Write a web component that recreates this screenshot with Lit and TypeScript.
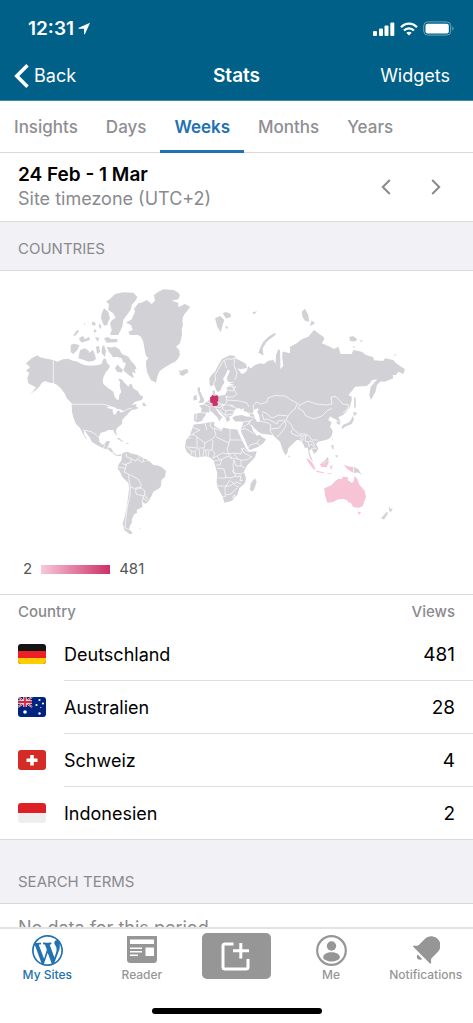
import { LitElement, html, svg, css } from "lit";
import { customElement, state } from "lit/decorators.js";

/* Land masses, in the coordinate space of the map's viewBox. */
const LAND = [
  // North and Central America
  "M26 363.3L31.7 358.3 37.3 355.3 40 357.3 46.7 358.7 53.3 360 57.3 361.7 60 360.5 63.3 359.3 68.3 358.7 71 360 74 361 77 361.5 80 363.3 85 365.3 91.7 365.7 96.7 365.3 101.7 364 102.5 361 104 358.3 106 359.3 107.3 363.3 110 366 108 370 106 371.7 104 376 102.7 380 103.3 384 108.3 388.3 113.3 391.7 114 395 116.3 399.3 118.7 400 119.3 395 121.3 392 119.7 386 120 382 118 378.5 121.7 379.3 125 383.3 128.3 386.7 130 384 131.7 384 133 388 136 390 138.3 391.7 140 395 143.3 396.7 141.7 400 135 401.7 131.7 405 136.7 404 136 406.5 139 408 135 409.5 131.7 410 128.3 413.3 125 416.7 122.3 420 122 424 116.7 428.3 116 431.7 117 436 114.3 432.7 113.3 430 108.3 430 105 431.7 100.7 432.7 99 436.7 99.3 441.7 102.7 445 105 443.3 106.7 441 110 441 108.3 446 107 447.5 110.7 447.7 112.7 450.7 114 453.3 117 455 121 454.3 121 456 116.7 456 112.7 453.3 108.3 449.8 103.3 448.3 96.7 445 91.7 441.7 90 438 87 434 84 430 84 434 87 439.5 85.5 438.5 82 432 80 428 76 424 73.5 418 72 412 71.7 406 71.7 403.3 66.7 398.3 65 394 61 388.5 58.3 386 53.3 383.3 50 382.7 45 381 41.7 382.7 39.5 386.5 35 390.7 29.3 394.8 32.7 391.7 36 387.3 33.3 386 28.3 383.3 27.3 378.3 29.3 372.7 26 370.7 30 367.3Z",
  "M142.5 403L144 402.5 146.5 406 143 406ZM116.7 438.3L119 438 124.3 442.3 121 441ZM125.5 443L129.5 443.3 127 444.3Z",
  // Canadian Arctic
  "M106 301.7L110 299 115 294 123.3 292.3 133.3 292.7 137.3 296.7 136 300 131.7 305 131 309 128.3 313.3 126 316 123.3 320 122.5 326 120.7 330 118.3 335 110 335 111.7 330 110 323.3 112 320 115.5 318 113.3 313.3 108.3 310 109 304Z",
  "M101.7 313.3L104 308.3 108.3 311.7 109 315 110 318.3 108.5 321 107.3 325 104 325.5 102.7 322.7 101 318ZM104 338.3L108 337 111 339 117.3 339 117.3 342.3 106.7 342.7Z",
  "M106.7 346.7L111 347.5 115 346.7 119.3 349.3 122 354 128.3 356.7 131.7 361.7 134 364 136.7 368.3 134.5 370 136 373.3 132 372 134 378.3 130 376 126.7 373.3 123.3 370.3 126 363.3 123 362 121.7 358.3 116.7 356.7 113 357.5 111.7 355 109 352Z",
  "M115 368.3L117.3 364.5 123 370 121.7 372.7 117 371.7ZM78.3 358.3L80 350 85 348.3 89 351 88.5 353 93 350 95 355 96 359 93.3 361 88.3 361.7 84 360ZM70.7 345L74 343.8 79.5 345 77.5 350 73.3 354 70.7 352ZM96 346.5L99 346 100 352 97 354ZM102 347L104 345 106 351 105 357 101.5 353ZM73.3 335.5L77 330 79.3 331 75 336ZM79 338.3L83 336 85 339.3 89 336.7 90 340 82 342.5 80 341ZM92 321.5L95.7 323 95 326 92 324.5ZM94 329L97 331 94 333ZM99 323.5L101.5 326 100.5 329 99 327ZM95 337L99.5 338 97.5 342ZM84 323L85.5 323.5 84.5 325ZM96 366L99 368 97 370Z",
  // Greenland and Iceland
  "M126 322.7L131.7 319.3 133 316 135 311.7 134 309 138.3 303.3 142 302.5 146.7 300 151.7 304 155 300.7 154 295 158 292 163.3 289.3 173.3 290 178 292.5 180 295 178.3 299.3 171.7 300.7 178.3 302.7 178.3 307.3 185 304 190 306.7 188 310 184.5 314 182.7 318 182.5 322 183 325 181.7 329 182 335 181 339 180 343.3 176 346.7 179.3 350 179.8 355 178.3 358.3 175 362 171.7 363.3 165 367.3 161 370 159.3 371.7 157.3 376.7 156 382.7 150.7 380 149 376 147.3 373.3 146 365 146 361 148.5 358 146 356 145 351.7 143.3 341.7 141 337 138.3 335 130 335 128.3 331.7 132.7 330 131 325Z",
  "M178.3 370L181 371 184 369.5 187.3 369 188.3 372.3 182.7 376 179.3 374.3 180 372.5Z",
  // South America
  "M121.7 454L124.3 452.3 128.3 451.7 130 453.3 138.3 455 143.3 458.3 147 459.5 150 461.7 153.3 465 158 465.5 161.7 467.3 166 470.7 165 476.7 161.5 480 161 486 159.3 488.3 153.3 491.7 151.5 496 148 502 145.5 503.8 142 502 142.5 507 136.7 510 137 513 134 514.5 131.7 520 132 522.5 129.7 526 129.3 529 132.7 533.3 130 534.3 124.3 530 122.7 523.3 124.5 518 126 511 127.3 503.3 128.3 495 129.3 488 128.3 482.7 122.7 477.5 120 472 117.7 468.3 118.3 465 121.7 460ZM139 528L141 528.3 140 529Z",
  // British Isles
  "M197.3 387.7L200 387.2 200 391 202.7 396.7 204.3 400 203.3 402.7 198.3 403 200.3 399.5 199.5 396 198.3 393.3ZM193.5 396.5L196.5 394.5 197 399.5 193.5 400.7Z",
  // Eurasia
  "M209.3 378.3L212 374.5 215 371.7 218.3 365 221.7 359.3 226 357 230 355.2 234.3 355.7 236.7 359 242 361.5 246 364 247 368 240 369.3 237.5 368 241 373.5 243.5 373.8 246.7 371 248.3 366 250.5 368.5 255 365 260 363.3 264 364 268.3 360.7 273.3 360 275.5 363.8 276 355 278.3 349.3 280 350 280.3 360 280.3 369 283.3 366 282.3 358 282.5 351.5 290 353.3 290 346.7 296.7 343.3 301.7 339.3 308.3 336.7 314 330 318.3 333.3 323.3 336.7 324.5 339 321.7 343.3 330 346.7 334 349 338.3 346.7 340.7 354 351.7 354 353.3 350 361.7 351.7 366 355 373.3 357.3 374 360.3 383.3 361 385 358.3 393.3 360 396 363 400 366 405 369.3 403.3 374 398.3 371.7 396 375 392.7 375 393.3 378.3 385 381.7 380.5 381.5 377 385 375.5 391.7 371 400 369.3 395 370.7 386.7 377.3 379.3 372 380 370 383.3 366.7 386 355 386.7 352 391 348.3 395 351.7 396.7 351.7 400 350 406.7 347 411 343 415 338.3 417.3 340.7 421.7 339.3 425 336.7 423.5 336.5 419.5 333.3 418.3 330 416.5 328.3 420 331.7 422.5 330 426.7 332.7 430.7 331.7 436 328.3 439.3 321.7 441 318.5 441.5 316 443.7 318.3 448.3 316.7 451.7 314 454 311.7 448.8 309 450.7 310.7 456 313.3 461.7 310.7 459.3 308.7 454 307.7 447.5 305 448 302 441.5 299 440.2 296.7 440 291.7 445 288.3 448.3 287.3 453.3 285.3 455.3 282.7 450 280 441.7 276.7 438.8 273.3 435.3 268.3 434.5 261.7 433.8 258.3 431.7 254.5 428.5 251 424 253 431 257 436 259.5 434.5 262 437 266 439.3 263.3 443.3 258.3 446.7 250 450 248.3 448.3 245 440 241.7 433.3 240.7 430 242.7 425 243.3 421.7 240 421.5 235 421.5 232.3 418 235 416 241.7 415 247 416.7 250.5 415.5 248.3 412.8 243.3 410.7 244 408 241 409.7 240 408.3 236 408.5 233.5 412 233 415 229 416.7 230 420 227 422 225 417 221.7 414 217.3 409 215.5 408.5 219.3 414 223 418 221 418 219.8 421.8 217.5 417.5 213.3 413.3 210.7 410.7 208.3 412.7 206 412.3 205.8 415 203.3 418.3 201.7 421 197.3 422.3 194 420.7 194.3 414 200.7 412.7 201.7 408.3 199 405.7 203.3 404.5 206.7 401.7 210 399.3 211 396 212.7 395 212.5 391 214.8 390 215 394.3 219.3 395.7 225 395 226.7 391.7 227 387.3 230 386 233.3 384.3 229.3 383.8 235 381.5 230 382.3 227.3 380.7 227 377.3 230 371 227.5 369.5 226.5 373 223 379 224.5 382.5 222 386 220.7 390 217.5 392.3 215.7 389 214 384 211 386.7 209.5 384Z",
  // Africa and Madagascar
  "M194 424.5L199.3 424 205 423.3 211.7 421.7 214.3 422.3 214.3 426 221.7 430 223.3 427.5 230 429 237.3 429.5 238.3 432.5 242.7 441.7 246 448.3 249.3 452 256.7 451.2 255 457.3 246.7 466 244 471.7 246 478.3 245 483.3 239.3 488.3 237.3 495 231.7 501 224.3 502.7 222.7 496.7 217.3 486.7 216.7 481.7 217.3 473.3 215 465 213.3 460 210 457.5 205 456.3 196.7 457.5 191.7 456 186.7 451.7 185 446.7 186 440 190 435 192.7 427.3ZM250 489.5L250.7 483.3 255 478.3 256.7 481.7 254 490 251.5 491.5Z",
  // Arctic islands of Eurasia
  "M215 318.3L220 316 224.3 320 222.7 325 220.7 332.3 217.3 326.7ZM222.7 313.3L226 312 230.7 314 231 317 226 318.5ZM225.5 326L228 327 227 329 225.5 328ZM252.5 312L257.3 311.5 254 314.5ZM258.3 352.7L260 348 263.3 341.7 268.3 336.7 275 332.7 275.7 334.7 266.7 341.7 262.7 348.3 263.5 355.5ZM301.7 311.7L305 308.7 308.3 315 309.3 321.7 305 320.7 302.5 317ZM311.5 320.3L315 323.3 310 326.3ZM349.3 337L353 336 357.3 339.3 355 341.5 350 341ZM359 339.5L363 341 361.5 342ZM352.7 346L355.5 347.3 353 347.5ZM394 355L397 354.3 395 356Z",
  // East Asia and Oceania
  "M354 396.7L355.5 398.3 356 406.7 354.3 408.3ZM353 412L357.5 413 354 416.3ZM341.5 427.5L343 424.8 348.3 422.8 351 420 352.5 416 354 419.3 351.7 424 345 426.7 342.5 429ZM331.8 438.5L332.8 438.5 332 441ZM331.5 445L333.5 445 333.5 450 331.8 448ZM335 455.5L337.5 455 337.3 458.3ZM288 455L290 456.5 289 458ZM320 463.5L325 460.5 327.5 457 329 460 326 462.3 322 464.5ZM354 467L358.3 469.3 361.7 475 358.3 472.6 354 473ZM381 518.3L386.7 512 388.3 513 384 519.5ZM389 506.5L390.5 509 392.8 508.3 391 512 389 510.7Z",
];

const LIGHT = [
  "M324.3 488.3L331.7 485 335 481.3 338.5 478.8 341.5 479.3 343.3 476.5 348.3 477.5 347.7 480 352 483 353.7 481 354.8 475.8 357.5 479.5 358.3 482.5 360.3 486 364.5 490.5 366 496.7 362.7 506 359.3 507.7 353.3 507.3 350.5 502.5 348.3 502.5 347 500 343.3 499 338.3 499.3 332.5 502.3 327.3 502.7 325 495ZM357.3 511.8L361 512 359.3 515Z",
  "M306 458.3L309.5 459.7 312.5 463 315.7 469.3 313.8 469.5 309.5 464ZM316 470.5L324.5 472.5 324 473.2 316.5 472ZM320 464L325 463 327.5 460.5 329 461.5 326.7 467.3 321 466.7ZM330 466L333.3 465 331.5 467 332.5 469 330.5 468.8ZM343.5 464.5L347.5 466.2 353.3 467 353.3 473 350 470.7 347 469ZM326 472.7L332 473.5 330 474.2Z",
  "M209.6 407L211 406.2 213.3 406.8 213 408.2 210 408.4Z",
];

const GERMANY =
  "M210 397.5L211.5 396.5 212.3 394.8 214 396 217.3 395.3 218.3 397.3 218.3 401 217 402 218 404.3 217 405.8 212.5 406 212.8 403.5 210.3 402.5Z";

const WATER = [
  // Caspian, Great Lakes
  "M252.7 412.5L254.5 409.5 257.5 408.3 259 410 257 411.5 259 415 260 421.5 257 422 255.5 419Z",
  "M106.5 407.5L110 406 115 407.5 117 409 121 409.5 124 411.5 120.5 412.5 119 410.5 117 411 116 414 114 415 112.5 411 113 409 109 408.5Z",
];

const BORDERS = [
  // Americas
  "M53.3 360V383.3L58 386M72 404.2H103L110 406M122 412L128 409 132 408M83 430L91 431.5 96 434.5 99.5 438.5M103.5 448L105 444M107 448L109 449.5M112 453L114 452M117.5 455.5V454",
  "M126 453.5L126.5 457 131 458.5 131 462.5 126 464 125.5 468.5 118.5 467M122 463.5L127 465M131 459L136 461 137 458.5 141 462 145 461.5M138.3 455L140 459M143.5 458.5L143 461.5M148 459.5L147 462M125.5 468.5L124 472 128.5 474 129 480 130.5 487M129.5 474.5L138 479 141.5 485 140 487 135 488.5 130.5 487M140 487L145 491 144.5 495 148 499.5M141 488L135.5 489.5 136 494 143 496 145 494M143 498L147.5 501.5M142 502.5L143 498 144 496M130.5 487L130 496 127.5 506 126 518 125 528 130 530",
  // Europe
  "M213.5 384L215.5 380 215 375 219 368 223 361 228 358.5 231 359.5 234 358 236 358.5M224.5 361L226.5 368M234.5 358.5L234 365 237 373 235 380M229.5 386L235 387.5M227 390L233 391 236 386M233 384V388L237 394 233 397H226M226 395.5L227 402 224 405 219 403M226.5 397L228 396M227 400L240 401 247 403 249 407M224 405L229 405 233 405.5 237 409M218 405L224 405M214 407L220 407.5 224 405M224 405L222 408.5 226 411 230 410 234 411M220 409.5L222 413 226 415 233 414M226 411L225 416M201 412.5L206 413.3M196.5 414L196 420M203.5 404L208 406 210 408 209 411M207 401L211 403.5M230 405.5L234 407.5M225 418L228 416",
  // Asia
  "M254 411L253 406 256 402 261 404 267 402 268 398 275 395.5 285 396 291 400 297 403 300 405 308 401 316 404 326 405 332 404 331 397 336 396.5 343 404 349 405 347 410 343 412.5M297 404L295 409 291 412 288 416 279 415 272 418 266 413 262 412M300 405L298 408 303 411 306 416 314 419 322 416 327 411 332 408M288 416L286 420 291 424 293 429 299 434 306 434 310 437 312 440 318 440M262 414L264 420 268 419 277 424 278 421 285 420M260 421L268 423 271 425 270 431 273 435M271 429L279 428 282 424 285 421M277 437L282 432 286 426 285 421M292 430L291 433 297 436 302 435.5M301 441V437L306 435M302 441L304 437.5M306 435L305 441 308 442 309 447M308 442L312 441 315 446M311 449L317 448M309 446L311 444 315 448M336 421L340 421.5",
  // Middle East
  "M248 416.5L253 417 256 419M249 413L255 414M243 422L250 421 253 419M250 421L249 424 253 428 256 431M243 427L248 424 250 421M243 428L248 430 254 434M248 448L250 445 257 443 259 439.5M257 443L260 446M241 430L244 429",
  // Africa
  "M193 427.5L200 430 193 433.5 193 435H190M191 438H186M193 434L205 443 212 439 216 435 214 428M205 423.5L207 430M211 422L210 426 213 429M214 428L222 431M230 429V440M216 437L229 443 230 440H242M197 437V448L188 447M186 446L190 450M205 443L204 448 199 448 194 452 190 450M213 440L212 450 204 450M229 443L227 450 229 454 222 453 217 456 213 458M212 450L215 453 213 458M204 449L203 456M199 449L200 457M195 452L196 458M191 451L192 455M209 451L208 457M206 450L206 457M229 454L234 453 241 454 243 448 249 452M241 448L244 453 252 457 246 460 241 460 238 459 234 454M229 454L232 458 238 459M217 456L220 460 214 461M220 460L228 456 232 459M216 465H220L222 459M217 468L224 469 226 478 218 478M241 460V466L245 468M234 460L236 466 241 466M234 460L233 465 234 473 240 474 245 472M232 470L236 476 230 478 226 477M217 486H230L236 482 241 484M236 477L241 476 240 481 243 480M230 480L225 488 225 495 231 494 237 488M231 481L236 486 239 487M223 497L226 496M233 496L235 495 235 498 233 498Z",
  // Indonesia and Papua New Guinea
  "M353.7 466V474M320 463.7L325 462.5 329 460",
];

const LIGHT_BORDERS = "M209.6 406.4L213.4 406.2";

const flagDe = svg`<rect width="28" height="20" fill="#141414"/><rect y="7" width="28" height="7" fill="#ed2024"/><rect y="14" width="28" height="6" fill="#ffcc05"/>`;
const flagAu = svg`<rect width="28" height="20" fill="#012380"/>
  <path d="M0 0L14 10M14 0L0 10" stroke="#e6e6f2" stroke-width="2"/>
  <path d="M0 0L14 10M14 0L0 10" stroke="#d92b45" stroke-width="1"/>
  <path d="M7 0V10M0 5H14" stroke="#f4e9ee" stroke-width="3.4"/>
  <path d="M7 0V10M0 5H14" stroke="#de2437" stroke-width="1.8"/>
  <g fill="#fff"><circle cx="7" cy="15" r="1.8"/><circle cx="21.500" cy="3" r="1.100"/><circle cx="18.500" cy="8" r="1.100"/><circle cx="25" cy="6.500" r="1.100"/><circle cx="22.800" cy="10.500" r=".6"/><circle cx="21.500" cy="16.500" r="1.200"/></g>`;
const flagCh = svg`<rect width="28" height="20" fill="#d52b26"/><path d="M14 5V15.500M8.500 10.200H19.500" stroke="#fff" stroke-width="3.600"/>`;
const flagId = svg`<rect width="28" height="10" fill="#df1f26"/><rect y="10" width="28" height="10" fill="#eee"/>`;

interface Country {
  name: string;
  views: number;
  flag: unknown;
}

@customElement("world-map")
class WorldMap extends LitElement {
  static styles = css`
    :host {
      display: block;
    }
    .map {
      display: block;
      width: 100%;
      height: auto;
    }
    .land {
      fill: #d2d1d6;
    }
    .light {
      fill: #f7c4d6;
    }
    .strong {
      fill: #cc3068;
    }
    .water {
      fill: #fff;
    }
    .border {
      fill: none;
      stroke: #fff;
      stroke-width: 0.7;
      stroke-linejoin: round;
    }
    .thin {
      stroke-width: 0.4;
    }
  `;

  render() {
    return html`<svg class="map" viewBox="18 285 437 253" role="img" aria-label="Views by country">
      <path class="land" d=${LAND.join("")} />
      <path class="water" d=${WATER.join("")} />
      <path class="border" d=${BORDERS.join("")} />
      <path class="light" d=${LIGHT.join("")} />
      <path class="border thin" d=${LIGHT_BORDERS} />
      <path class="strong" d=${GERMANY} />
    </svg>`;
  }
}

@customElement("app-root")
class AppRoot extends LitElement {
  @state() private period = "Weeks";

  private periods = ["Insights", "Days", "Weeks", "Months", "Years"];

  private countries: Country[] = [
    { name: "Deutschland", views: 481, flag: flagDe },
    { name: "Australien", views: 28, flag: flagAu },
    { name: "Schweiz", views: 4, flag: flagCh },
    { name: "Indonesien", views: 2, flag: flagId },
  ];

  static styles = css`
    :host {
      display: flex;
      flex-direction: column;
      height: 100vh;
      overflow: hidden;
      background: #fff;
      color: #000;
      font-family: Inter, "Liberation Sans", sans-serif;
      font-size: 18px;
    }
    * {
      box-sizing: border-box;
    }
    button {
      margin: 0;
      padding: 0;
      border: 0;
      background: none;
      color: inherit;
      font: inherit;
      cursor: pointer;
    }
    svg {
      display: block;
    }
    h1,
    h2,
    p {
      margin: 0;
      font: inherit;
    }
    .top {
      flex: none;
      background: #016087;
      color: #fff;
      border-bottom: 1px solid #4a88a5;
    }
    .status {
      display: flex;
      align-items: center;
      justify-content: space-between;
      height: 51px;
      padding: 6px 19px 0 28px;
    }
    .clock,
    .signals {
      display: flex;
      align-items: center;
      gap: 4px;
      font-size: 19px;
      font-weight: 600;
    }
    .signals {
      gap: 5px;
    }
    .nav {
      display: grid;
      grid-template-columns: 1fr auto 1fr;
      align-items: center;
      height: 49px;
      padding: 0 23px 0 14px;
    }
    .back {
      display: flex;
      align-items: center;
      gap: 5px;
      justify-self: start;
    }
    .title {
      font-size: 19px;
      font-weight: 600;
      padding-left: 9px;
    }
    .widgets {
      justify-self: end;
    }
    .tabs {
      flex: none;
      display: flex;
      height: 52px;
      border-bottom: 1px solid #d9d9db;
      color: #8e8e92;
      font-size: 17px;
      font-weight: 500;
    }
    .tab {
      height: 52px;
      padding: 2px 14px 0;
      border-bottom: 3px solid transparent;
    }
    .tab.on {
      color: #2271b1;
      border-color: #2271b1;
      font-weight: 600;
    }
    .scroll {
      flex: 1;
      min-height: 0;
      overflow: hidden;
    }
    .range {
      display: flex;
      align-items: center;
      justify-content: space-between;
      height: 69px;
      padding: 0 32px 0 18px;
      border-bottom: 1px solid #d9d9db;
    }
    .dates {
      font-size: 19px;
      font-weight: 600;
      line-height: 24px;
    }
    .zone {
      color: #8a8a8e;
      font-size: 18px;
      line-height: 24px;
    }
    .arrows {
      display: flex;
      gap: 40px;
    }
    .section {
      display: flex;
      align-items: flex-end;
      height: 49px;
      padding: 0 18px 12px;
      background: #f2f1f6;
      border-bottom: 1px solid #d9d9db;
      color: #8a8a8e;
      font-size: 15px;
      line-height: 18px;
    }
    .section.tall {
      height: 64px;
    }
    .chart {
      padding: 14px 18px 16px;
      border-bottom: 1px solid #d9d9db;
    }
    .legend {
      display: flex;
      align-items: center;
      gap: 9px;
      margin-top: 22px;
      padding-left: 5px;
      color: #555;
      font-size: 15px;
      line-height: 18px;
    }
    .ramp {
      width: 69px;
      height: 9px;
      background: linear-gradient(90deg, #f7c8d9, #cc3068);
    }
    .countries {
      width: 100%;
      border-collapse: separate;
      border-spacing: 0;
      border-bottom: 1px solid #d9d9db;
    }
    th {
      height: 33px;
      padding: 0 18px;
      color: #8a8a8e;
      font-size: 15px;
      font-weight: 500;
      text-align: left;
    }
    td {
      height: 53px;
      padding: 0;
      border-bottom: 1px solid #dedee0;
    }
    tr:last-child td {
      height: 52px;
      border-bottom: 0;
    }
    td.flag {
      width: 64px;
      padding-left: 18px;
      border-bottom-color: transparent;
    }
    .flag svg {
      border-radius: 3px;
    }
    th.views,
    td.views {
      padding-right: 18px;
      text-align: right;
    }
    td.views {
      font-size: 19px;
    }
    .empty {
      padding: 12px 18px;
      color: #8a8a8e;
      font-size: 18px;
      line-height: 24px;
    }
    .bar {
      flex: none;
      background: #fff;
      border-top: 2px solid #e3e3e4;
      color: #969696;
    }
    .items {
      display: grid;
      grid-template-columns: repeat(5, 1fr);
      height: 79px;
      padding-top: 4px;
    }
    .item {
      display: flex;
      flex-direction: column;
      align-items: center;
      gap: 1px;
      height: 52px;
      color: #969696;
      font-size: 12px;
      font-weight: 500;
      line-height: 14px;
      text-decoration: none;
    }
    .item.on {
      color: #2271b1;
    }
    .glyph {
      display: grid;
      place-items: center;
      height: 34px;
    }
    .compose {
      display: grid;
      place-items: center;
      justify-self: center;
      width: 69px;
      height: 46px;
      border-radius: 5px;
      background: #969696;
      color: #fff;
    }
    .home {
      width: 170px;
      height: 6px;
      margin: 0 auto 9px;
      border-radius: 3px;
      background: #000;
    }
  `;

  private renderTop() {
    return html`<header class="top">
      <div class="status">
        <div class="clock">
          <span>12:31</span>
          <svg width="13" height="13" viewBox="0 0 14 14" fill="currentColor" aria-hidden="true">
            <path d="M13 .7L.8 6.200C.2 6.500.4 7.200 1 7.200H6.500V12.700C6.500 13.400 7.300 13.500 7.500 12.900Z" />
          </svg>
        </div>
        <div class="signals">
          <svg width="22" height="14" viewBox="0 0 22 14" fill="currentColor" aria-hidden="true">
            <rect x="0" y="9" width="4" height="5" rx="1" />
            <rect x="6" y="6.500" width="4" height="7.500" rx="1" />
            <rect x="11.500" y="3.500" width="4" height="10.500" rx="1" />
            <rect x="17.300" y="0.500" width="4" height="13.500" rx="1" />
          </svg>
          <svg width="18" height="14" viewBox="0 0 18 14" fill="none" stroke="currentColor" stroke-width="2.200" aria-hidden="true">
            <path d="M1 5.300C5.500.3 12.500.3 17 5.300M4 8.600C6.800 5.500 11.200 5.500 14 8.600" />
            <path d="M9 13.500L6.300 10.800C7.800 9.300 10.200 9.300 11.700 10.800Z" fill="currentColor" stroke="none" />
          </svg>
          <svg width="31" height="15" viewBox="0 0 31 15" aria-hidden="true">
            <rect x=".7" y=".9" width="27" height="13.200" rx="4" fill="none" stroke="#6fa3b9" stroke-width="1" />
            <rect x="2.500" y="2.700" width="23.300" height="9.700" rx="2" fill="#fff" />
            <path d="M29.300 5.300C31 6 31 9 29.300 9.700Z" fill="#6fa3b9" />
          </svg>
        </div>
      </div>
      <nav class="nav">
        <button class="back">
          <svg width="15" height="24" viewBox="0 0 15 24" fill="none" stroke="currentColor" stroke-width="3.600" aria-hidden="true">
            <path d="M13.500 1.300L2.800 12 13.500 22.700" />
          </svg>
          <span>Back</span>
        </button>
        <h1 class="title">Stats</h1>
        <button class="widgets">Widgets</button>
      </nav>
    </header>`;
  }

  private renderTable() {
    return html`<table class="countries">
      <thead>
        <tr>
          <th colspan="2" scope="col">Country</th>
          <th class="views" scope="col">Views</th>
        </tr>
      </thead>
      <tbody>
        ${this.countries.map(
          (c) => html`<tr>
            <td class="flag"><svg width="28" height="20" viewBox="0 0 28 20" aria-hidden="true">${c.flag}</svg></td>
            <td>${c.name}</td>
            <td class="views">${c.views}</td>
          </tr>`
        )}
      </tbody>
    </table>`;
  }

  private renderBar() {
    return html`<footer class="bar">
      <nav class="items">
        <a class="item on" href="#sites">
          <span class="glyph">
            <svg width="31" height="31" viewBox="0 0 20 20" fill="currentColor" aria-hidden="true">
              <path
                d="M20 10c0-5.510-4.490-10-10-10C4.480 0 0 4.490 0 10c0 5.520 4.480 10 10 10 5.510 0 10-4.480 10-10zM7.780 15.370L4.370 6.220c.55-.02 1.170-.08 1.170-.08.5-.06.44-1.130-.06-1.110 0 0-1.450.11-2.370.11-.18 0-.37 0-.58-.01C4.120 2.690 6.870 1.110 10 1.110c2.330 0 4.450.87 6.050 2.340-.68-.11-1.650.39-1.650 1.580 0 .74.45 1.360.9 2.100.35.61.55 1.360.55 2.460 0 1.490-1.400 5-1.400 5l-3.030-8.370c.54-.02.82-.17.82-.17.5-.05.44-1.250-.06-1.220 0 0-1.440.12-2.380.12-.87 0-2.330-.12-2.330-.12-.5-.03-.56 1.200-.06 1.220l.92.08 1.260 3.410zM17.410 10c.24-.64.74-1.870.43-4.250.7 1.290 1.050 2.710 1.050 4.250 0 3.290-1.730 6.240-4.400 7.780.97-2.590 1.940-5.200 2.920-7.780zM6.100 18.090C3.120 16.650 1.110 13.530 1.110 10c0-1.300.23-2.480.72-3.590C3.250 10.300 4.670 14.200 6.100 18.090zm4.030-6.630l2.580 6.980c-.86.29-1.760.45-2.710.45-.79 0-1.570-.11-2.290-.33.81-2.380 1.620-4.740 2.420-7.100z"
              />
            </svg>
          </span>
          <span>My Sites</span>
        </a>
        <a class="item" href="#reader">
          <span class="glyph">
            <svg width="30" height="34" viewBox="0 0 30 34" aria-hidden="true">
              <path fill="currentColor" d="M0 3H30V26.500Q30 30 26.500 30H3.500Q0 30 0 26.500Z" />
              <path fill="#fff" d="M3 6.500H27V11H3ZM18.500 14.500H27V23H18.500ZM3 14.500H15V16H3ZM3 18H15V19.500H3ZM3 21.500H11V23H3Z" />
            </svg>
          </span>
          <span>Reader</span>
        </a>
        <button class="compose" aria-label="New post">
          <svg width="30" height="30" viewBox="0 0 30 30" fill="none" stroke="currentColor" stroke-width="3" aria-hidden="true">
            <path d="M12.500 3H4Q2 3 2 5V26Q2 28 4 28H25Q27 28 27 26V18" />
            <path d="M19.800 2V17.500M12 9.800H28" />
          </svg>
        </button>
        <a class="item" href="#me">
          <span class="glyph">
            <svg width="31" height="31" viewBox="0 0 31 31" fill="currentColor" aria-hidden="true">
              <circle cx="15.500" cy="15.500" r="14.300" fill="none" stroke="currentColor" stroke-width="2.200" />
              <circle cx="15.500" cy="11" r="4.700" />
              <path d="M7.200 22.300C7.200 15.600 23.800 15.600 23.800 22.300C23.800 24.800 19.500 26.600 15.500 26.600S7.200 24.800 7.200 22.300Z" />
            </svg>
          </span>
          <span>Me</span>
        </a>
        <a class="item" href="#notifications">
          <span class="glyph">
            <svg width="28" height="28" viewBox="2.800 2.800 17.500 18.300" fill="currentColor" aria-hidden="true">
              <path
                d="M6.140 14.970l2.828 2.827c-.362.362-.862.586-1.414.586-1.105 0-2-.895-2-2 0-.552.224-1.052.586-1.414zm8.867 5.324L14.300 21 3 9.700l.706-.707 1.102.157c.754.108 1.690-.122 2.077-.51l3.885-3.884c2.340-2.340 6.135-2.340 8.475 0s2.340 6.135 0 8.475l-3.885 3.886c-.388.388-.618 1.323-.51 2.077l.157 1.100z"
              />
            </svg>
          </span>
          <span>Notifications</span>
        </a>
      </nav>
      <div class="home"></div>
    </footer>`;
  }

  render() {
    return html`
      ${this.renderTop()}
      <nav class="tabs" role="tablist">
        ${this.periods.map(
          (p) => html`<button
            class=${p === this.period ? "tab on" : "tab"}
            role="tab"
            aria-selected=${p === this.period}
            @click=${() => (this.period = p)}
          >
            ${p}
          </button>`
        )}
      </nav>
      <main class="scroll">
        <div class="range">
          <div>
            <p class="dates">24 Feb - 1 Mar</p>
            <p class="zone">Site timezone (UTC+2)</p>
          </div>
          <div class="arrows">
            <button aria-label="Previous week">
              <svg width="10" height="16" viewBox="0 0 10 16" fill="none" stroke="#8a8a8e" stroke-width="2">
                <path d="M8.800 1L1.800 8 8.800 15" />
              </svg>
            </button>
            <button aria-label="Next week">
              <svg width="10" height="16" viewBox="0 0 10 16" fill="none" stroke="#8a8a8e" stroke-width="2">
                <path d="M1.200 1L8.200 8 1.200 15" />
              </svg>
            </button>
          </div>
        </div>
        <h2 class="section">COUNTRIES</h2>
        <section class="chart">
          <world-map></world-map>
          <div class="legend"><span>2</span><span class="ramp"></span><span>481</span></div>
        </section>
        ${this.renderTable()}
        <h2 class="section tall">SEARCH TERMS</h2>
        <p class="empty">No data for this period</p>
      </main>
      ${this.renderBar()}
    `;
  }
}
